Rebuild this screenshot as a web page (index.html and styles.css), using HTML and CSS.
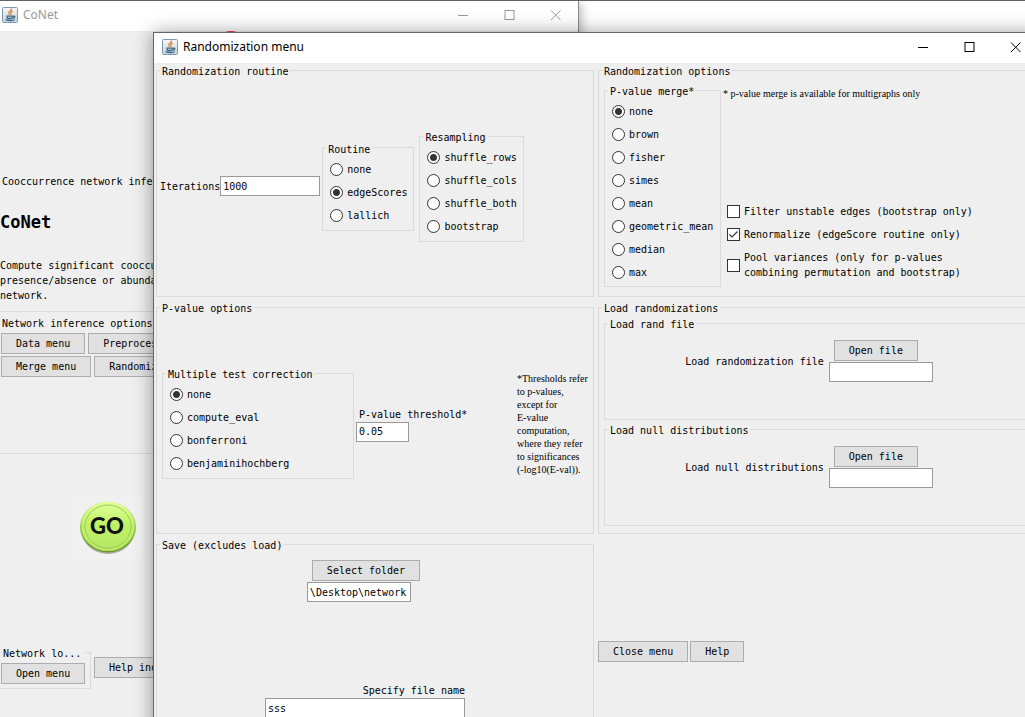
FILE: index.html
```html
<!DOCTYPE html>
<html lang="en">
<head>
<meta charset="utf-8">
<title>CoNet</title>
<link rel="stylesheet" href="styles.css">
</head>
<body>
<svg class="defs" width="0" height="0" aria-hidden="true">
  <defs>
    <linearGradient id="frame" x1="0" y1="0" x2="0" y2="1"><stop offset="0" stop-color="#f4f7f9"/><stop offset="1" stop-color="#c3d2dc"/></linearGradient>
    <symbol id="java" viewBox="0 0 16 16">
      <rect x="0.5" y="0.5" width="15" height="15" rx="1" fill="url(#frame)" stroke="#7c9bb0"/>
      <path d="M9.500 1.500C10.300 3.500 6.300 4.500 6.800 6.200C7 7 8 7.400 8 8.400M10.500 4C8.700 4.900 8.500 6 9.400 7.300" fill="none" stroke="#e0883c" stroke-width="1.400"/>
      <path d="M4.500 9.200H11M5 9.200C5 10.500 5.500 11.500 6.500 11.500H9.200C10.200 11.500 10.600 10.500 10.700 9.300C13.500 8.500 13.500 11 10.700 11.200M3.500 12.500C5 13.800 10.500 13.800 12.500 12.700" fill="none" stroke="#3f6882" stroke-width="1.300"/>
    </symbol>
    <symbol id="min" viewBox="0 0 11 11"><path d="M0 5.500H10" stroke="currentColor"/></symbol>
    <symbol id="max" viewBox="0 0 11 11"><rect x="1" y="0.500" width="9" height="9" fill="none" stroke="currentColor"/></symbol>
    <symbol id="close" viewBox="0 0 11 11"><path d="M1 0.500L10.500 10M10.500 0.500L1 10" stroke="currentColor"/></symbol>
  </defs>
</svg>
<div class="desktop">
  <main class="window main-window">
    <header class="titlebar">
      <svg class="app-icon"><use href="#java"/></svg>
      <span class="title">CoNet</span>
      <button class="caption" aria-label="Minimize"><svg><use href="#min"/></svg></button>
      <button class="caption" aria-label="Maximize"><svg><use href="#max"/></svg></button>
      <button class="caption" aria-label="Close"><svg><use href="#close"/></svg></button>
    </header>
    <div class="main-body">
      <div class="logo-area"><span class="logo-tip"></span></div>
      <p class="tagline">Cooccurrence network inference</p>
      <h1 class="product">CoNet</h1>
      <p class="about">Compute significant cooccurrence from<br>presence/absence or abundance data in a<br>network.</p>
      <section class="inference">
        <h2 class="caption-text">Network inference options</h2>
        <div class="button-row"><button class="btn">Data menu</button><button class="btn">Preprocessing menu</button></div>
        <div class="button-row"><button class="btn">Merge menu</button><button class="btn">Randomization menu</button></div>
      </section>
      <button class="go" aria-label="GO">
        <svg width="72" height="64" viewBox="0 0 72 64">
          <defs>
            <linearGradient id="face" x1="0" y1="0" x2="0" y2="1"><stop offset="0" stop-color="#e2ff9a"/><stop offset="0.450" stop-color="#c0f268"/><stop offset="1" stop-color="#b5e765"/></linearGradient>
            <linearGradient id="rim" x1="0" y1="0" x2="0" y2="1"><stop offset="0" stop-color="#d9f896"/><stop offset="0.600" stop-color="#8fc23f"/><stop offset="1" stop-color="#6a9430"/></linearGradient>
          </defs>
          <ellipse cx="37" cy="34" rx="27" ry="25" fill="#a9aca5"/>
          <ellipse cx="37" cy="32" rx="28" ry="25.500" fill="url(#rim)"/>
          <ellipse cx="37" cy="31.500" rx="26.500" ry="24.500" fill="url(#face)"/>
          <ellipse cx="37" cy="31.500" rx="23" ry="21.500" fill="none" stroke="#9ccb55" stroke-width="1"/>
          <text class="go-text" x="36" y="39" text-anchor="middle">GO</text>
        </svg>
      </button>
      <div class="bottom-row">
        <fieldset class="group load-group">
          <legend>Network lo...</legend>
          <button class="btn">Open menu</button>
        </fieldset>
        <button class="btn">Help index</button>
      </div>
    </div>
  </main>

  <section class="window dialog" role="dialog" aria-label="Randomization menu">
    <header class="titlebar">
      <svg class="app-icon"><use href="#java"/></svg>
      <span class="title">Randomization menu</span>
      <button class="caption" aria-label="Minimize"><svg><use href="#min"/></svg></button>
      <button class="caption" aria-label="Maximize"><svg><use href="#max"/></svg></button>
      <button class="caption" aria-label="Close"><svg><use href="#close"/></svg></button>
    </header>
    <form class="panels">
      <fieldset class="group panel routine-panel">
        <legend>Randomization routine</legend>
        <div class="iterations"><label for="iter">Iterations</label><input class="field" id="iter" type="text" value="1000"></div>
        <fieldset class="group choices">
          <legend>Routine</legend>
          <label><input type="radio" name="routine">none</label>
          <label><input type="radio" name="routine" checked>edgeScores</label>
          <label><input type="radio" name="routine">lallich</label>
        </fieldset>
        <fieldset class="group choices resampling">
          <legend>Resampling</legend>
          <label><input type="radio" name="resampling" checked>shuffle_rows</label>
          <label><input type="radio" name="resampling">shuffle_cols</label>
          <label><input type="radio" name="resampling">shuffle_both</label>
          <label><input type="radio" name="resampling">bootstrap</label>
        </fieldset>
      </fieldset>

      <fieldset class="group panel options-panel">
        <legend>Randomization options</legend>
        <fieldset class="group choices">
          <legend>P-value merge*</legend>
          <label><input type="radio" name="merge" checked>none</label>
          <label><input type="radio" name="merge">brown</label>
          <label><input type="radio" name="merge">fisher</label>
          <label><input type="radio" name="merge">simes</label>
          <label><input type="radio" name="merge">mean</label>
          <label><input type="radio" name="merge">geometric_mean</label>
          <label><input type="radio" name="merge">median</label>
          <label><input type="radio" name="merge">max</label>
        </fieldset>
        <div class="option-side">
          <p class="note">* p-value merge is available for multigraphs only</p>
          <div class="checks">
            <label><input type="checkbox">Filter unstable edges (bootstrap only)</label>
            <label><input type="checkbox" checked>Renormalize (edgeScore routine only)</label>
            <label><input type="checkbox"><span>Pool variances (only for p-values<br>combining permutation and bootstrap)</span></label>
          </div>
        </div>
      </fieldset>

      <fieldset class="group panel pvalue-panel">
        <legend>P-value options</legend>
        <fieldset class="group choices correction">
          <legend>Multiple test correction</legend>
          <label><input type="radio" name="mtc" checked>none</label>
          <label><input type="radio" name="mtc">compute_eval</label>
          <label><input type="radio" name="mtc">bonferroni</label>
          <label><input type="radio" name="mtc">benjaminihochberg</label>
        </fieldset>
        <div class="threshold"><label for="thr">P-value threshold*</label><input class="field" id="thr" type="text" value="0.05"></div>
        <p class="note">*Thresholds refer<br>to p-values,<br>except for<br>E-value<br>computation,<br>where they refer<br>to significances<br>(-log10(E-val)).</p>
      </fieldset>

      <fieldset class="group panel load-panel">
        <legend>Load randomizations</legend>
        <fieldset class="group loader">
          <legend>Load rand file</legend>
          <div class="load-row">
            <label for="rand">Load randomization file</label>
            <div class="picker"><button type="button" class="btn">Open file</button><input class="field" id="rand" type="text"></div>
          </div>
        </fieldset>
        <fieldset class="group loader">
          <legend>Load null distributions</legend>
          <div class="load-row">
            <label for="null">Load null distributions</label>
            <div class="picker"><button type="button" class="btn">Open file</button><input class="field" id="null" type="text"></div>
          </div>
        </fieldset>
      </fieldset>

      <fieldset class="group panel save-panel">
        <legend>Save (excludes load)</legend>
        <div class="picker folder"><button type="button" class="btn">Select folder</button><input class="field" type="text" aria-label="Folder" value="\Desktop\network"></div>
        <div class="filename"><label for="fname">Specify file name</label><input class="field" id="fname" type="text" value="sss"></div>
      </fieldset>

      <div class="actions"><button type="button" class="btn">Close menu</button><button type="button" class="btn">Help</button></div>
    </form>
  </section>
</div>
</body>
</html>
```

FILE: styles.css
```css
* { box-sizing: border-box; }

body {
  margin: 0;
  overflow: hidden;
  background: #fff;
  color: #000;
  font: 10px/15px "DejaVu Sans Mono", "Liberation Mono", monospace;
}

p, h1, h2 { margin: 0; }
button, input { font: inherit; color: inherit; }
.defs { position: absolute; }

.desktop {
  position: relative;
  height: 100vh;
  overflow: hidden;
  border-top: 1px solid #5c636c;
}

/* Windows */
.window { position: absolute; background: #efefef; }

.main-window {
  left: 0;
  top: 0;
  width: 579px;
  height: 800px;
  border-right: 1px solid #8a8a8a;
  box-shadow: 2px 2px 10px rgba(0, 0, 0, 0.3);
}

.dialog {
  left: 153px;
  right: -14px;
  top: 31px;
  border: 1px solid #666;
  box-shadow: 0 1px 18px rgba(0, 0, 0, 0.4);
}

.titlebar {
  display: flex;
  align-items: center;
  height: 30px;
  padding: 0 0 2px 8px;
  background: #fff;
}

.main-window .titlebar { padding-left: 2px; color: #999; }
.app-icon { width: 16px; height: 16px; }

.title {
  flex: 1;
  padding-left: 5px;
  font: 12px/18px "Noto Sans", "Open Sans", sans-serif;
}

.caption {
  display: grid;
  place-items: center;
  width: 46px;
  height: 28px;
  padding: 0;
  border: 0;
  background: none;
}

.caption svg { width: 11px; height: 11px; }

/* Controls */
.btn {
  height: 21px;
  padding: 0 14px;
  border: 1px solid #adadad;
  background: #e1e1e1;
  line-height: 19px;
  white-space: nowrap;
}

.field {
  height: 20px;
  padding: 0 2px;
  border: 1px solid #9a9a9a;
  background: #fff;
}

input[type="radio"],
input[type="checkbox"] {
  appearance: none;
  flex: none;
  width: 13px;
  height: 13px;
  margin: 0 4px 0 0;
  border: 1px solid #333;
  background: #fff;
}

input[type="radio"] { border-radius: 50%; }
input[type="radio"]:checked { background: radial-gradient(circle, #333 3px, #fff 4px); }

input[type="checkbox"]:checked {
  background: #fff url("data:image/svg+xml,%3Csvg xmlns='http://www.w3.org/2000/svg' viewBox='0 0 11 11'%3E%3Cpath d='M1.500 5.500L4 8L9.500 2.500' fill='none' stroke='%23333' stroke-width='1.200'/%3E%3C/svg%3E");
}

/* Titled groups: --inset is the left padding, which the legend steps back over */
.group {
  --inset: 0px;
  min-width: 0;
  margin: 0;
  padding: 0 0 0 var(--inset);
  border: 1px solid #dadada;
}

.group > legend {
  margin-left: calc(3px - var(--inset));
  padding: 4px 2px 0 2px;
  line-height: 8px;
  white-space: nowrap;
}

.choices { --inset: 7px; flex: none; padding: 4px 6px 3px var(--inset); }
.choices label { display: flex; align-items: center; height: 23px; }

.note { font: 10px/13px "Liberation Serif", serif; white-space: nowrap; }

/* Dialog panels */
.panels {
  display: grid;
  grid-template-columns: repeat(2, minmax(0, 1fr));
  grid-auto-rows: 233px;
  gap: 4px;
  padding: 1px 2px 0;
}

.panel { display: flex; }

.routine-panel { --inset: 3px; align-items: center; }
.iterations { display: flex; align-items: center; margin-right: 2px; }
.iterations .field { width: 100px; }
.resampling { margin-left: 5px; }

.options-panel { --inset: 5px; align-items: stretch; padding: 8px 5px 9px; }
.options-panel .choices { width: 117px; }
.option-side { display: flex; flex-direction: column; justify-content: space-between; padding: 3px 0 3px 2px; }
.checks { padding-left: 4px; }
.checks label { display: flex; align-items: center; min-height: 23px; white-space: nowrap; }
.checks label:last-child { min-height: 38px; }

.pvalue-panel { --inset: 5px; align-items: center; }
.correction { width: 192px; }
.threshold { display: flex; flex: 1; flex-direction: column; align-items: flex-start; padding: 3px 0 0 2px; }
.threshold label { padding-left: 3px; line-height: 14px; }
.threshold .field { width: 53px; }
.pvalue-panel .note { width: 76px; padding-top: 2px; }

.load-panel { --inset: 5px; flex-direction: column; gap: 3px; padding: 4px 5px 7px; }
.loader { flex: 1; }
.load-row { display: flex; justify-content: center; align-items: center; padding: 11px 16px 0 0; gap: 5px; }
.picker { display: flex; flex-direction: column; align-items: flex-start; gap: 1px; }
.picker .btn { margin-left: 5px; }
.picker .field { width: 104px; }

.save-panel { flex-direction: column; align-items: center; padding: 10px 20px 0 0; }
.folder { margin-right: 3px; }
.filename { display: flex; flex-direction: column; align-items: flex-end; padding-top: 81px; }
.filename .field { width: 200px; }

.actions { display: flex; align-items: center; gap: 2px; padding-bottom: 7px; }

/* Main window */
.main-body { white-space: nowrap; }
.logo-area { height: 143px; padding-left: 225px; }
.logo-tip { display: block; width: 12px; height: 4px; border-radius: 50% 50% 0 0; background: #f02040; }
.tagline { padding-left: 2px; }
.product { padding: 21px 0 20px; font-size: 17px; line-height: 24px; }
.about { padding-top: 4px; }

.inference {
  height: 143px;
  margin-top: 8px;
  padding: 4px 0 0 1px;
  border-top: 1px solid #dadada;
  border-bottom: 1px solid #dadada;
}

.caption-text { padding: 0 0 2px 1px; font-size: 10px; font-weight: normal; }
.button-row { display: flex; gap: 3px; padding-bottom: 2px; }

.go { display: block; margin: 41px 0 0 71px; padding: 0; border: 0; background: #f1f1f1; }
.go svg { display: block; }
.go-text { font: 900 22px "Lato", sans-serif; fill: #111; }

.bottom-row { display: flex; align-items: center; gap: 3px; padding-top: 87px; }
.load-group { --inset: 1px; width: 91px; border-left: 0; padding: 5px 0 4px var(--inset); }
.load-group > legend { margin-left: 0; padding-right: 4px; }
```
